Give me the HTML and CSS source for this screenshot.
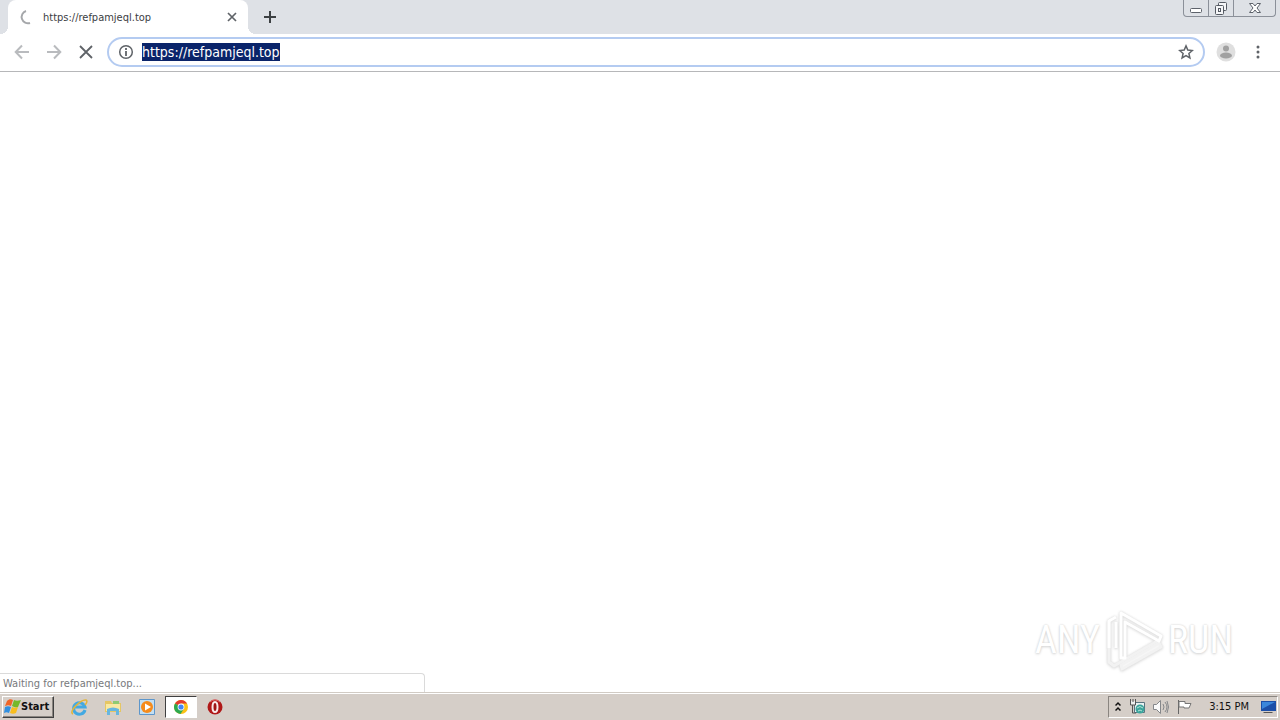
FILE: index.html
```html
<!DOCTYPE html>
<html lang="en">
<head>
    <meta charset="UTF-8">
    <meta name="viewport" content="width=device-width, initial-scale=1.0">
    <title>https://refpamjeql.top</title>
    <link rel="stylesheet" href="styles.css">
</head>
<body>
    <header class="tab-strip">
        <div class="tab">
            <svg class="spinner" width="16" height="16" viewBox="0 0 16 16"><path d="M7 2A6 6 0 0 0 11 14" fill="none" stroke="#a5a7aa" stroke-width="2"/></svg>
            <span class="tab-title">https://refpamjeql.top</span>
            <button type="button" class="icon-btn tab-close" aria-label="Close tab">
                <svg width="16" height="16" viewBox="0 0 16 16"><path d="M4 4l8 8M12 4l-8 8" stroke="#5f6368" stroke-width="1.700"/></svg>
            </button>
        </div>
        <button type="button" class="icon-btn new-tab" aria-label="New tab">
            <svg width="16" height="16" viewBox="0 0 16 16"><path d="M8 2v12M2 8h12" stroke="#3c4043" stroke-width="2"/></svg>
        </button>
        <div class="window-buttons">
            <button type="button" aria-label="Minimize">
                <svg width="14" height="16" viewBox="0 0 14 16"><rect x="1.5" y="8.500" width="11" height="4" rx="1" fill="#fff" stroke="#5d626b"/></svg>
            </button>
            <button type="button" aria-label="Restore">
                <svg width="14" height="16" viewBox="0 0 14 16"><g fill="#f5f6f8" stroke="#555a63"><rect x="4.500" y="2.500" width="8" height="8" rx="1"/><rect x="1.500" y="5.500" width="8" height="9" rx="1"/><rect x="4.500" y="8.500" width="2" height="3"/></g></svg>
            </button>
            <button type="button" class="window-close" aria-label="Close">
                <svg width="14" height="16" viewBox="0 0 14 16"><path d="M1.500 3.500h3.500l2 2.500 2-2.500h3.500L9 8l3.500 4.500H9L7 10l-2 2.500H1.500L5 8z" fill="#fff" stroke="#5d626b"/></svg>
            </button>
        </div>
    </header>

    <nav class="toolbar">
        <button type="button" class="icon-btn" aria-label="Back">
            <svg width="16" height="16" viewBox="0 0 16 16"><path d="M15 8H2M8 1.500L1.700 8 8 14.500" fill="none" stroke="#b9bbbe" stroke-width="2"/></svg>
        </button>
        <button type="button" class="icon-btn" aria-label="Forward">
            <svg width="16" height="16" viewBox="0 0 16 16"><path d="M1 8h13M8 1.500L14.300 8 8 14.500" fill="none" stroke="#b9bbbe" stroke-width="2"/></svg>
        </button>
        <button type="button" class="icon-btn" aria-label="Stop">
            <svg width="16" height="16" viewBox="0 0 16 16"><path d="M2 2l12 12M14 2L2 14" stroke="#5f6368" stroke-width="1.800"/></svg>
        </button>
        <div class="omnibox">
            <button type="button" class="icon-btn" aria-label="Site information">
                <svg width="16" height="16" viewBox="0 0 16 16"><circle cx="8" cy="8" r="6.300" fill="none" stroke="#5f6368" stroke-width="1.500"/><path d="M8 4v2M8 7v5" stroke="#5f6368" stroke-width="1.800"/></svg>
            </button>
            <input type="text" id="address" class="address" value="https://refpamjeql.top" aria-label="Address" spellcheck="false">
            <button type="button" class="icon-btn" aria-label="Bookmark">
                <svg width="16" height="16" viewBox="0 0 16 16"><path d="M8 1.900l1.800 4.200 4.500.4-3.400 3 1 4.400L8 11.600l-3.900 2.300 1-4.400-3.400-3 4.500-.4z" fill="none" stroke="#5f6368" stroke-width="1.500"/></svg>
            </button>
        </div>
        <button type="button" class="icon-btn profile" aria-label="Profile">
            <svg width="20" height="20" viewBox="0 0 20 20"><circle cx="10" cy="10" r="9.500" fill="#dfdfdf"/><circle cx="10" cy="6.500" r="3" fill="#a1a1a1"/><ellipse cx="10" cy="13.500" rx="6" ry="3" fill="#a1a1a1"/></svg>
        </button>
        <button type="button" class="icon-btn" aria-label="Menu">
            <svg width="16" height="16" viewBox="0 0 16 16" fill="#5f6368"><circle cx="8" cy="3" r="1.500"/><circle cx="8" cy="8" r="1.500"/><circle cx="8" cy="13" r="1.500"/></svg>
        </button>
    </nav>

    <main class="page">
        <div class="watermark">
            <span>ANY</span>
            <svg class="play" width="60" height="64" viewBox="0 0 60 64" fill="none" stroke-width="3" stroke-linejoin="round">
                <path d="M5 13v41l5 4 45-26" stroke="#f2f2f2"/>
                <path d="M17 57l38-22 2 4-39 22z" fill="#f6f6f6" stroke="#f2f2f2"/>
                <path d="M12 9L5 13v27M12 14v26" stroke="#fff"/>
                <path d="M17 50V5l40 23-2 5-34-19v36z" stroke="#fff"/>
            </svg>
            <span>RUN</span>
        </div>
        <div class="status">Waiting for refpamjeql.top...</div>
    </main>

    <footer class="taskbar">
        <button type="button" class="start">
            <svg width="17" height="18" viewBox="0 0 17 18"><path d="M3 3c2-2 4-2 6-1L7 8C5 7 4 7 1 8z" fill="#ef6528"/><path d="M10 2c2 1 4 1 7 0l-3 7c-2 1-4 0-6-1z" fill="#76b82a"/><path d="M1 9c2-1 4-1 6 0l-2 6c-2-1-3-1-5 0z" fill="#318fe0"/><path d="M8 9c2 1 4 1 6 0l-2 6c-2 1-4 1-6 0z" fill="#f8bd1d"/></svg>
            Start
        </button>
        <div class="launchers">
            <button type="button" class="task" aria-label="Internet Explorer">
                <svg width="18" height="18" viewBox="0 0 18 18" fill="none"><path d="M15 12a5.800 5.800 0 1 1 0-3H5" stroke="#43a9e2" stroke-width="3"/><path d="M3 16c-5-2 8-15 13-14 2 1 0 4-1 5" stroke="#e3b53a" stroke-width="1.500"/></svg>
            </button>
            <button type="button" class="task" aria-label="Explorer">
                <svg width="18" height="18" viewBox="0 0 18 18"><path d="M1 3h6l1 2h9v9H1z" fill="#e5c664"/><path d="M2 6h14v7H2z" fill="#f9e9a3"/><path d="M9 3h6v3H9z" fill="#8fca72"/><path d="M3 17v-6q6-3 12 0v6h-3v-4H6v4z" fill="#68b6df"/></svg>
            </button>
            <button type="button" class="task" aria-label="Media Player">
                <svg width="18" height="18" viewBox="0 0 18 18"><path d="M1.500 1.500h15v15h-15z" fill="#c3dff2" stroke="#5d96cb"/><circle cx="9" cy="9" r="6" fill="#f58b1b"/><path d="M7 5.500l6 3.500-6 3.500z" fill="#fff"/></svg>
            </button>
            <button type="button" class="task active" aria-label="Chrome">
                <svg width="16" height="16" viewBox="0 0 16 16"><circle cx="8" cy="8" r="7" fill="#fbc116"/><path d="M8 8L2 4.400A7 7 0 0 1 14.100 4.600H8z" fill="#e33b2e"/><path d="M8 8L2 4.400A7 7 0 0 0 7.500 15L11 9.800z" fill="#2da94f"/><circle cx="8" cy="8" r="3.400" fill="#fff"/><circle cx="8" cy="8" r="2.600" fill="#4285f4"/></svg>
            </button>
            <button type="button" class="task" aria-label="Opera">
                <svg width="16" height="16" viewBox="0 0 16 16"><circle cx="8" cy="8" r="7.500" fill="#b01818"/><path d="M3 3a7 7 0 0 1 10 0" fill="none" stroke="#e87575"/><ellipse cx="8" cy="8" rx="2.500" ry="5" fill="#a01515" stroke="#f8eaea" stroke-width="2"/></svg>
            </button>
        </div>
        <div class="tray">
            <button type="button" class="icon-btn" aria-label="Show hidden icons">
                <svg width="6" height="12" viewBox="0 0 6 12"><path d="M.5 4.500L3 2l2.500 2.500M.5 9.500L3 7l2.500 2.500" fill="none" stroke="#111" stroke-width="1.500"/></svg>
            </button>
            <svg width="16" height="16" viewBox="0 0 16 16"><path d="M5.500 3.500h10v10h-10z" fill="#e9f3f3" stroke="#5a7480"/><path d="M1 2h5v4H1z" fill="#eee"/><path d="M1.500 0v6h5V0M4 0v3M3.500 6v8H7" fill="none" stroke="#555"/><circle cx="11" cy="10" r="4.500" fill="#3ba49c"/><path d="M8 9q3-3 6 0M9 12q2-2 4 0" fill="none" stroke="#b7e5d7"/></svg>
            <svg width="16" height="16" viewBox="0 0 16 16" fill="none" stroke="#85878a"><path d="M.5 5.500h3l4-4v13l-4-4h-3z" fill="#fafafa"/><path d="M10 5q2 3 0 6M12 3q4 5 0 10M14 2q3 6 0 12"/></svg>
            <svg width="16" height="16" viewBox="0 0 16 16"><path d="M1.500 1v14" stroke="#666"/><path d="M2 2.500h6v2h6L12 9H7V8H2z" fill="#fff" stroke="#777"/></svg>
            <time class="clock">3:15 PM</time>
            <svg width="16" height="16" viewBox="0 0 16 16"><path d="M1 2h15v10H1z" fill="#1c4fa8"/><path d="M2 3h13L2 10z" fill="#3b87db"/><path d="M4 13h8l1 1H3z" fill="#555"/></svg>
        </div>
    </footer>

<script>
const address = document.getElementById("address");
address.focus();
address.select();
</script>
</body>
</html>
```
FILE: styles.css
```css
:root {
    --frame: #dee1e6;
    --taskbar: #d5cec8;
}

* {
    box-sizing: border-box;
    margin: 0;
    padding: 0;
}

body {
    display: flex;
    flex-direction: column;
    min-height: 100vh;
    font-family: "DejaVu Sans Condensed", "Noto Sans", sans-serif;
    font-size: 11px;
    background: #fff;
    color: #3c4043;
}

button {
    border: none;
    background: none;
    font: inherit;
    color: inherit;
}

svg {
    display: block;
    flex: none;
}

.icon-btn {
    display: flex;
    align-items: center;
    justify-content: center;
    flex: none;
}

/* tabs */
.tab-strip {
    display: flex;
    align-items: flex-start;
    height: 34px;
    padding-left: 8px;
    padding-right: 4px;
    background: var(--frame);
}

.tab {
    position: relative;
    display: flex;
    align-items: center;
    width: 240px;
    height: 34px;
    padding: 0 8px 0 11px;
    border-radius: 8px 8px 0 0;
    background: #fff;
}

.tab::before,
.tab::after {
    content: "";
    position: absolute;
    bottom: 0;
    width: 8px;
    height: 8px;
}

.tab::before {
    left: -8px;
    background: radial-gradient(circle at 0 0, var(--frame) 8px, #fff 8px);
}

.tab::after {
    right: -8px;
    background: radial-gradient(circle at 100% 0, var(--frame) 8px, #fff 8px);
}

.tab-title {
    flex: 1;
    margin-left: 8px;
}

.new-tab {
    width: 28px;
    height: 34px;
    margin-left: 8px;
}

.window-buttons {
    display: flex;
    height: 17px;
    margin-left: auto;
    border: 1px solid #8b9099;
    border-top: none;
    border-radius: 0 0 4px 4px;
}

.window-buttons button {
    display: flex;
    justify-content: center;
    width: 25px;
    border-right: 1px solid #8b9099;
}

.window-buttons .window-close {
    width: 41px;
    border-right: none;
}

/* toolbar */
.toolbar {
    display: flex;
    align-items: center;
    gap: 16px;
    height: 38px;
    padding: 0 14px 1px;
    border-bottom: 1px solid #b6b7b9;
}

.omnibox {
    display: flex;
    align-items: center;
    flex: 1;
    gap: 8px;
    height: 30px;
    margin-left: -3px;
    padding: 0 9px;
    border: 2px solid #b4cbf1;
    border-radius: 15px;
}

.address {
    flex: 1;
    min-width: 0;
    border: none;
    outline: none;
    font-family: inherit;
    font-size: 14px;
    line-height: 18px;
    color: #3c4043;
}

.address::selection {
    background: #0a246a;
    color: #fff;
}

.profile {
    margin: 0 -2px 0 -5px;
}

/* page area */
.page {
    position: relative;
    flex: 1;
    display: flex;
    flex-direction: column;
    justify-content: flex-end;
}

.watermark {
    position: absolute;
    right: 47px;
    bottom: 20px;
    display: flex;
    align-items: center;
    gap: 4px;
    font-family: "Roboto Condensed", "Open Sans Condensed", "Liberation Sans", sans-serif;
    font-size: 38px;
    line-height: 64px;
    color: #fff;
    text-shadow: 0 0 2px #d0d0d0, 0 1px 3px #d8d8d8;
}

.play {
    filter: drop-shadow(0 0 1px #ddd) drop-shadow(0 1px 1px #e4e4e4);
}

.status {
    width: 425px;
    max-width: 100%;
    height: 19px;
    padding: 0 3px;
    border: 1px solid #dadada;
    border-left: none;
    border-bottom: none;
    border-radius: 0 4px 0 0;
    line-height: 20px;
    color: #77797c;
}

/* taskbar */
.taskbar {
    display: flex;
    align-items: center;
    height: 28px;
    padding: 0 2px;
    border-top: 1px solid #d1cbc4;
    box-shadow: inset 0 1px #fff;
    background: var(--taskbar);
    color: #111;
}

.start {
    display: flex;
    align-items: center;
    width: 52px;
    height: 22px;
    padding-left: 1px;
    border: 1px solid;
    border-color: #fff #404040 #404040 #fff;
    box-shadow: inset -1px -1px #8a8580;
    font-weight: bold;
}

.launchers {
    display: flex;
    gap: 2px;
    margin-left: 9px;
}

.task {
    display: flex;
    align-items: center;
    justify-content: center;
    width: 32px;
    height: 22px;
}

.task.active {
    border: 1px solid;
    border-color: #404040 #fff #fff #404040;
    background: #fff;
}

.tray {
    display: flex;
    align-items: center;
    gap: 8px;
    height: 22px;
    margin-left: auto;
    padding: 0 1px 0 6px;
    border: 1px solid;
    border-color: #8a8580 #fff #fff #8a8580;
}

.clock {
    margin: 0 3px 0 8px;
}
```
